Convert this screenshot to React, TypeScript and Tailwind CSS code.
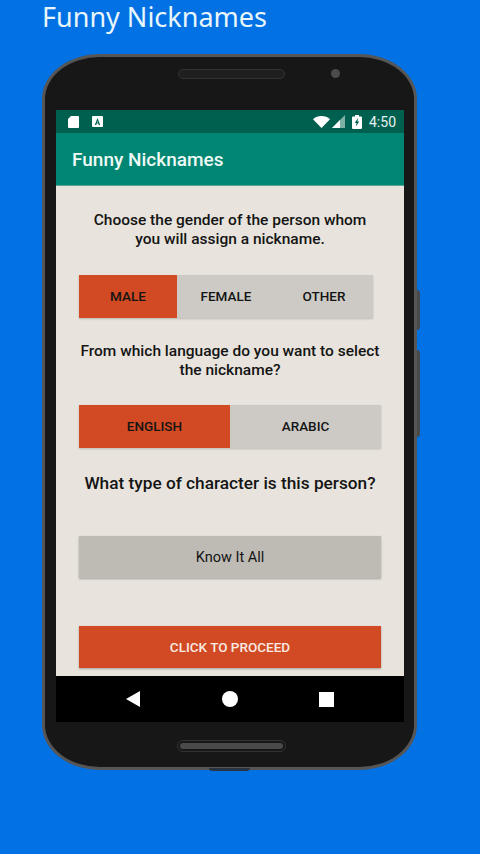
export default function App() {
  return (
    <div className="w-[480px] h-[854px] overflow-hidden bg-[#0271e3] font-['Roboto',sans-serif]">
      <div className="h-[54px] pl-[42px] text-[27px] leading-[33px] text-[#e8f6fb] font-['Noto_Sans',sans-serif]">Funny Nicknames</div>
      <div className="relative ml-[42px] w-[375px] h-[716px]">
        <div className="absolute left-[375px] top-[236px] w-[3px] h-[40px] bg-[#4a4a4a] rounded-r-sm" />
        <div className="absolute left-[375px] top-[296px] w-[3px] h-[87px] bg-[#4a4a4a] rounded-r-sm" />
        <div className="absolute left-[167px] top-[714px] w-[41px] h-[3px] bg-[#2a3440] rounded-b-sm" />
        <div className="w-full h-full rounded-[58px/45px] border-[3px] border-[#565656] bg-[#171717] flex flex-col px-[11px]">
          <div className="relative h-[53px] shrink-0">
            <div className="absolute left-[122px] top-[12px] w-[107px] h-[10px] rounded-full border border-[#333] bg-[#1f1f1f]" />
            <div className="absolute left-[275px] top-[12px] w-[9px] h-[9px] rounded-full bg-[#4b4b4b]" />
          </div>
          <div className="w-[348px] h-[612px] shrink-0 flex flex-col">
            <div className="h-[23px] bg-[#00604f] flex items-center pl-[12px] pr-[8px] text-white shrink-0">
              <svg width="11" height="12" viewBox="0 0 11 12"><path d="M3 0h7a1 1 0 0 1 1 1v10a1 1 0 0 1-1 1H1a1 1 0 0 1-1-1V3z" fill="#fff" /></svg>
              <svg className="ml-[13px]" width="11" height="11" viewBox="0 0 11 11"><rect width="11" height="11" rx="1" fill="#fff" /><path d="M5.500 2 2.800 9h1.400l.5-1.400h1.600L6.800 9h1.400zM5 6.400l.5-1.600.5 1.600z" fill="#00604f" /></svg>
              <div className="flex-1" />
              <svg width="17" height="12" viewBox="0 0 17 12"><path d="M0 3.200C2.200 1.200 5.200 0 8.500 0s6.300 1.200 8.500 3.200L8.500 12z" fill="#fff" /></svg>
              <svg className="ml-[2px]" width="13" height="13" viewBox="0 0 13 13"><path d="M13 0v13H0z" fill="#7fb0a6" /><path d="M8 5v8H0z" fill="#fff" /></svg>
              <svg className="ml-[7px]" width="10" height="14" viewBox="0 0 10 14"><path d="M3 0h4v1.500h2a1 1 0 0 1 1 1V13a1 1 0 0 1-1 1H1a1 1 0 0 1-1-1V2.500a1 1 0 0 1 1-1h2z" fill="#fff" /><path d="M6 3 2.800 8h1.700l-.5 3.500L7.200 6.500H5.500z" fill="#00604f" /></svg>
              <span className="ml-[7px] text-[14px] leading-none text-[#e6f2ef]">4:50</span>
            </div>
            <div className="h-[53px] bg-[#008672] flex items-center pl-[16px] pt-[2px] text-[19px] font-medium text-[#effaf7] shrink-0 border-b border-[#5aa596]">Funny Nicknames</div>
            <div className="h-[490px] bg-[#e8e4dd] flex flex-col text-[#141414] shrink-0">
              <div className="mt-[25px] h-[38px] text-center text-[15.500px] leading-[19px] font-medium">
                <p>Choose the gender of the person whom</p>
                <p>you will assign a nickname.</p>
              </div>
              <div className="mt-[26px] ml-[23px] w-[294px] h-[43px] flex bg-[#cdcac5] shadow-[0_1px_2px_rgba(0,0,0,0.2)] text-[13.500px] font-medium">
                <div className="w-[98px] bg-[#d24a23] flex items-center justify-center">MALE</div>
                <div className="w-[98px] flex items-center justify-center">FEMALE</div>
                <div className="w-[98px] flex items-center justify-center">OTHER</div>
              </div>
              <div className="mt-[24px] h-[38px] text-center text-[15.500px] leading-[19px] font-medium">
                <p>From which language do you want to select</p>
                <p>the nickname?</p>
              </div>
              <div className="mt-[25px] ml-[23px] w-[302px] h-[43px] flex bg-[#cdcac5] shadow-[0_1px_2px_rgba(0,0,0,0.2)] text-[13.500px] font-medium">
                <div className="w-[151px] bg-[#d24a23] flex items-center justify-center">ENGLISH</div>
                <div className="w-[151px] flex items-center justify-center">ARABIC</div>
              </div>
              <div className="mt-[24px] h-[22px] text-center text-[17.250px] leading-[22px] font-medium">What type of character is this person?</div>
              <div className="mt-[42px] ml-[23px] w-[302px] h-[42px] pt-[2px] bg-[#bebab4] shadow-[0_1px_2px_rgba(0,0,0,0.3)] flex items-center justify-center text-[14.500px]">Know It All</div>
              <div className="mt-[48px] ml-[23px] w-[302px] h-[42px] bg-[#d24a23] shadow-[0_1px_2px_rgba(0,0,0,0.3)] flex items-center justify-center text-[13.500px] font-medium text-[#f8ebe4]">CLICK TO PROCEED</div>
            </div>
            <div className="h-[46px] bg-black flex items-center shrink-0 pl-[70px]">
              <svg width="14" height="16" viewBox="0 0 14 16"><path d="M14 0v16L0 8z" fill="#fff" /></svg>
              <div className="ml-[82px] w-[16px] h-[16px] rounded-full bg-white" />
              <div className="ml-[81px] w-[15px] h-[15px] bg-white" />
            </div>
          </div>
          <div className="relative flex-1">
            <div className="absolute left-[121px] top-[18px] w-[109px] h-[12px] rounded-full border border-[#333] p-[2px]">
              <div className="w-full h-full rounded-full bg-[#4a4a4a]" />
            </div>
          </div>
        </div>
      </div>
    </div>
  );
}
